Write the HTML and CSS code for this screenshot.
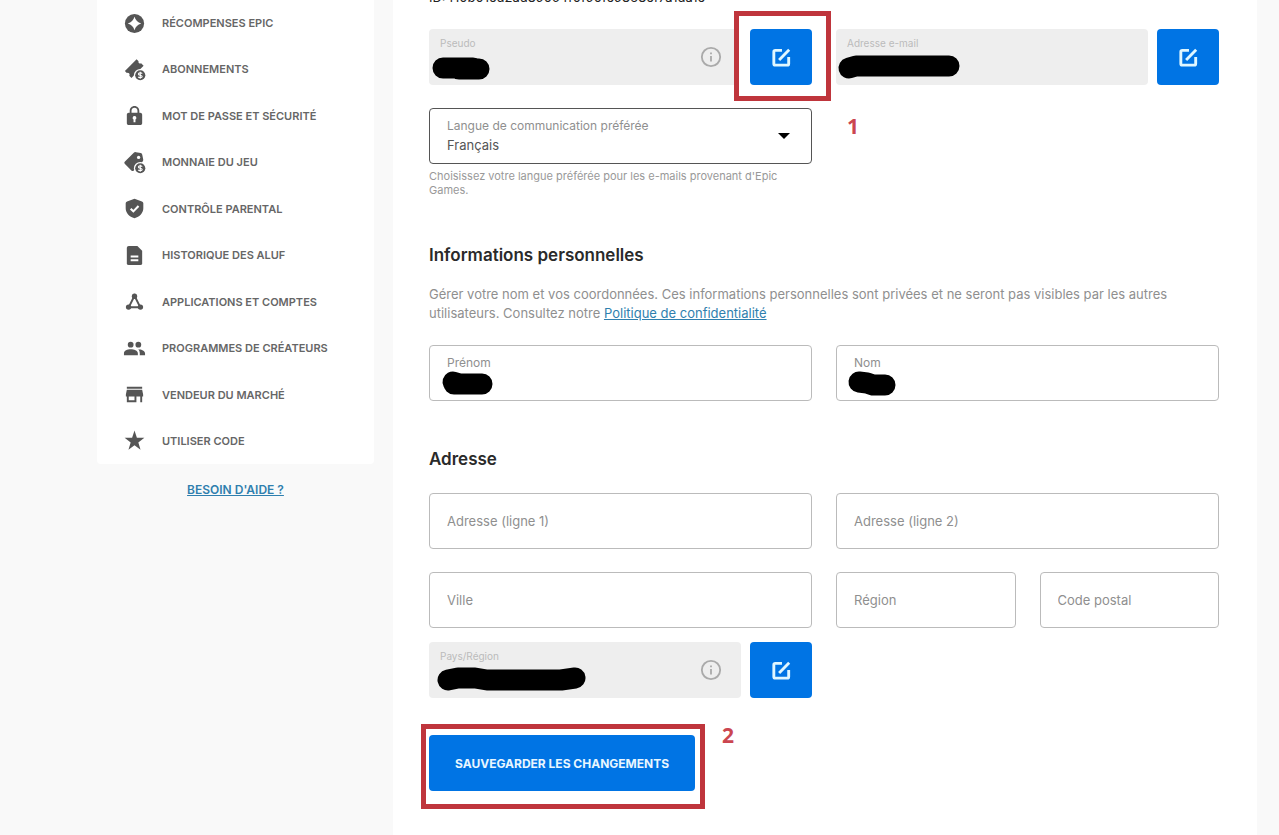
FILE: index.html
```html
<!DOCTYPE html>
<html lang="fr">
<head>
  <meta charset="UTF-8">
  <meta name="viewport" content="width=device-width, initial-scale=1.0">
  <title>Paramètres du compte</title>
  <link rel="stylesheet" href="styles.css">
</head>
<body>

<div class="page">
  <!-- Sidebar -->
  <aside class="sidebar">
    <nav>
      <ul class="menu">
        <li><a href="#">
          <svg class="icon" viewBox="0 0 24 24"><circle cx="12" cy="12" r="10"/><path fill="#fff" d="M12 5q1.600 5.400 7 7q-5.400 1.600-7 7q-1.600-5.400-7-7q5.400-1.600 7-7z"/></svg>
          Récompenses Epic</a></li>
        <li><a href="#">
          <svg class="icon" viewBox="0 0 24 24"><path d="M2 13.500L14.200 1.300l2 2q-.4 1.600.7 2.200t2-.1l2.600 2.700L8.800 20.800l-2.200-2.200q.7-1.800-.3-2.700t-2.300-.3z"/><circle cx="18" cy="18" r="6.600" fill="#fff"/><circle cx="18" cy="18" r="5.300"/><path fill="none" stroke="#fff" stroke-width="1.200" d="M20 16.300q-.6-.9-2-.9-1.900 0-1.900 1.300 0 1.100 1.900 1.300 2 .3 2 1.400 0 1.200-2 1.200-1.500 0-2.100-.9M18 14.400v7.200"/></svg>
          Abonnements</a></li>
        <li><a href="#">
          <svg class="icon" viewBox="0 0 24 24"><path fill-rule="evenodd" d="M18 9h-1V7c0-2.760-2.240-5-5-5S7 4.240 7 7v2H6c-1.100 0-2 .9-2 2v9c0 1.100.9 2 2 2h12c1.100 0 2-.9 2-2v-9c0-1.100-.9-2-2-2zM8.900 7c0-1.710 1.390-3.100 3.100-3.100s3.100 1.390 3.100 3.100v2H8.900V7zM12 12.500a2 2 0 0 0-1 3.700V19h2v-2.800a2 2 0 0 0-1-3.700z"/></svg>
          Mot de passe et sécurité</a></li>
        <li><a href="#">
          <svg class="icon" viewBox="0 0 24 24"><path d="M1.800 11.200L11 2q1-1 2.500-.8l5 1q1.300.3 1.600 1.600l1 5q.2 1.500-.8 2.500L11 20.500q-1 .8-2 0l-7.200-7.200q-1-1 0-2.100z"/><circle cx="16.300" cy="6.700" r="1.700" fill="#fff"/><circle cx="18" cy="18" r="6.600" fill="#fff"/><circle cx="18" cy="18" r="5.300"/><path fill="none" stroke="#fff" stroke-width="1.200" d="M20 16.300q-.6-.9-2-.9-1.900 0-1.900 1.300 0 1.100 1.900 1.300 2 .3 2 1.400 0 1.200-2 1.200-1.500 0-2.100-.9M18 14.400v7.200"/></svg>
          Monnaie du jeu</a></li>
        <li><a href="#">
          <svg class="icon" viewBox="0 0 24 24"><path d="M12 1.800l7.800 2.800q1.400.5 1.400 2v5.200c0 5-3.700 8.800-9.200 10.400-5.500-1.600-9.200-5.400-9.200-10.400V6.600q0-1.500 1.400-2z"/><path fill="none" stroke="#fff" stroke-width="2.200" d="M8 12.300l2.800 2.700 5.400-5.500"/></svg>
          Contrôle parental</a></li>
        <li><a href="#">
          <svg class="icon" viewBox="0 0 24 24"><path d="M6 2h9l5 5v13q0 2-2 2H6q-2 0-2-2V4q0-2 2-2z"/><path stroke="#fff" stroke-width="2" d="M8 13h8M8 17h8"/></svg>
          Historique des aluf</a></li>
        <li><a href="#">
          <svg class="icon" viewBox="0 0 24 24"><path fill="none" stroke="#555" stroke-width="2" d="M12 6L6 18h12z"/><circle cx="12" cy="6.500" r="2.800"/><circle cx="5.800" cy="17.800" r="2.800"/><circle cx="18.200" cy="17.800" r="2.800"/></svg>
          Applications et comptes</a></li>
        <li><a href="#">
          <svg class="icon" viewBox="0 0 24 24"><circle cx="8" cy="8" r="3"/><circle cx="16" cy="8" r="3"/><path d="M1 19v-2c0-2.700 3.500-4.200 7-4.200s7.500 1.500 7.500 4.200v2zM16 12.800c3.500.2 7 1.700 7 4.200v2h-5.500v-2q0-2.600-1.500-4.200z"/></svg>
          Programmes de créateurs</a></li>
        <li><a href="#">
          <svg class="icon" viewBox="0 0 24 24"><path d="M20 4H4v2h16V4zm1 10v-2l-1-5H4l-1 5v2h1v6h10v-6h4v6h2v-6h1zm-9 4H6v-4h6v4z"/></svg>
          Vendeur du marché</a></li>
        <li><a href="#">
          <svg class="icon" viewBox="0 0 24 24"><path d="M12 1.500l2.500 7.700h7.800l-6.300 4.800 2.300 7.700-6.300-4.700-6.300 4.700L8 14 1.700 9.200h7.800z"/></svg>
          Utiliser code</a></li>
      </ul>
    </nav>
    <a class="help" href="#">BESOIN D'AIDE ?</a>
  </aside>

  <!-- Account form -->
  <main class="content">
    <form>
      <p class="account-id">ID: f10b01ed2ad890c4f0f90fe9868ef7a1da1e</p>

      <div class="grid">
        <div class="locked">
          <div class="field field-locked">
            <div class="field-text">
              <label for="pseudo">Pseudo</label>
              <input type="text" id="pseudo" readonly>
            </div>
            <svg class="info" viewBox="0 0 24 24"><circle cx="12" cy="12" r="10"/><path d="M12 11v6M12 7v2"/></svg>
            <svg class="mask" viewBox="0 0 312 56"><path d="M14 39H44M30 40H50"/></svg>
          </div>
          <div class="marked marked-edit">
            <button class="edit" type="button" aria-label="Modifier le pseudo">
              <svg viewBox="0 0 24 24"><path d="M12.500 4.500H5.500Q4 4.500 4 6v12.500Q4 20 5.500 20h12.500q1.500 0 1.500-1.500V11.500M9.500 14.500L20 4"/></svg>
            </button>
          </div>
        </div>
        <div class="locked">
          <div class="field field-locked">
            <div class="field-text">
              <label for="email">Adresse e-mail</label>
              <input type="email" id="email" readonly>
            </div>
            <svg class="mask" viewBox="0 0 312 56"><path d="M13 39L20 37H113"/></svg>
          </div>
          <button class="edit" type="button" aria-label="Modifier l'adresse e-mail">
            <svg viewBox="0 0 24 24"><path d="M12.500 4.500H5.500Q4 4.500 4 6v12.500Q4 20 5.500 20h12.500q1.500 0 1.500-1.500V11.500M9.500 14.500L20 4"/></svg>
          </button>
        </div>
        <div>
          <div class="field field-select">
            <div class="field-text">
              <label for="langue">Langue de communication préférée</label>
              <select id="langue">
                <option>Français</option>
              </select>
            </div>
            <svg class="arrow" viewBox="0 0 12 6"><path d="M0 0h12L6 6z"/></svg>
          </div>
          <p class="hint">Choisissez votre langue préférée pour les e-mails provenant d'Epic Games.</p>
        </div>
        <strong class="step step-one">1</strong>
      </div>

      <h2>Informations personnelles</h2>
      <p class="intro">Gérer votre nom et vos coordonnées. Ces informations personnelles sont privées et ne seront pas visibles par les autres utilisateurs. Consultez notre <a href="#">Politique de confidentialité</a></p>
      <div class="grid">
        <div class="field">
          <div class="field-text">
            <label for="prenom">Prénom</label>
            <input type="text" id="prenom">
          </div>
          <svg class="mask" viewBox="0 0 312 56"><path d="M23 36L30 38H52M24 38H52"/></svg>
        </div>
        <div class="field">
          <div class="field-text">
            <label for="nom">Nom</label>
            <input type="text" id="nom">
          </div>
          <svg class="mask" viewBox="0 0 312 56"><path d="M22 36L30 37 36 39H48"/></svg>
        </div>
      </div>

      <h2>Adresse</h2>
      <div class="grid">
        <div class="field"><input type="text" aria-label="Adresse (ligne 1)" placeholder="Adresse (ligne 1)"></div>
        <div class="field"><input type="text" aria-label="Adresse (ligne 2)" placeholder="Adresse (ligne 2)"></div>
        <div class="field"><input type="text" aria-label="Ville" placeholder="Ville"></div>
        <div class="grid">
          <div class="field"><input type="text" aria-label="Région" placeholder="Région"></div>
          <div class="field"><input type="text" aria-label="Code postal" placeholder="Code postal"></div>
        </div>
      </div>
      <div class="grid country">
        <div class="locked">
          <div class="field field-locked">
            <div class="field-text">
              <label for="pays">Pays/Région</label>
              <input type="text" id="pays" readonly>
            </div>
            <svg class="info" viewBox="0 0 24 24"><circle cx="12" cy="12" r="10"/><path d="M12 11v6M12 7v2"/></svg>
            <svg class="mask" viewBox="0 0 312 56"><path d="M19 38L29 36H46L58 38H132L146 36"/></svg>
          </div>
          <button class="edit" type="button" aria-label="Modifier le pays">
            <svg viewBox="0 0 24 24"><path d="M12.500 4.500H5.500Q4 4.500 4 6v12.500Q4 20 5.500 20h12.500q1.500 0 1.500-1.500V11.500M9.500 14.500L20 4"/></svg>
          </button>
        </div>
      </div>

      <div class="actions">
        <div class="marked marked-save">
          <button class="save" type="submit">SAUVEGARDER LES CHANGEMENTS</button>
        </div>
        <strong class="step">2</strong>
      </div>
    </form>
  </main>
</div>

</body>
</html>
```
FILE: styles.css
```css
* {
  box-sizing: border-box;
}
body {
  margin: 0;
  background-color: #f9f9f9;
  font-family: Inter, "Liberation Sans", sans-serif;
  font-size: 13px;
  color: #8f8f8f;
}
p, h2, ul {
  margin: 0;
  padding: 0;
}
a {
  color: #2f7fae;
}
.page {
  display: grid;
  grid-template-columns: 277px 1fr;
  gap: 19px;
  min-height: 100vh;
  padding: 0 22px 0 97px;
}

/* Sidebar */
.menu {
  display: flex;
  flex-direction: column;
  justify-content: space-between;
  min-height: 464px;
  list-style: none;
  background-color: white;
  border-radius: 0 0 4px 4px;
}
.menu a {
  display: flex;
  align-items: center;
  gap: 16px;
  height: 46px;
  padding-left: 26px;
  font-size: 11px;
  font-weight: 600;
  color: #666;
  text-decoration: none;
  text-transform: uppercase;
}
.icon {
  width: 23px;
  height: 23px;
  fill: #555;
}
.help {
  display: block;
  margin-top: 18px;
  text-align: center;
  font-size: 12px;
  font-weight: 600;
  line-height: 16px;
}

/* Form */
.content {
  padding: 0 38px 26px 36px;
  background-color: white;
  overflow: hidden;
}
.account-id {
  margin-top: -13px;
  margin-bottom: 22px;
  font-size: 13px;
  line-height: 20px;
  color: #222;
}
h2 {
  font-size: 17px;
  font-weight: 600;
  line-height: 24px;
  color: #2a2a2a;
}
.grid {
  display: grid;
  grid-template-columns: 1fr 1fr;
  gap: 23px 24px;
}
.country {
  margin-top: 14px;
}
.field {
  position: relative;
  display: flex;
  align-items: center;
  width: 100%;
  height: 56px;
  padding: 0 17px;
  border: 1px solid #bbb;
  border-radius: 4px;
}
.field-text {
  display: flex;
  flex-direction: column;
  flex: 1;
}
.field label {
  font-size: 12px;
  line-height: 18px;
}
.field input,
.field select {
  width: 100%;
  height: 20px;
  padding: 0;
  border: 0;
  outline: 0;
  background: none;
  appearance: none;
  font-family: inherit;
  font-size: 13px;
  color: #555;
}
.field input::placeholder {
  color: #8f8f8f;
}
.field-select {
  border-color: #555;
}
.arrow {
  width: 12px;
  height: 6px;
  margin-right: 4px;
}
.field-locked {
  padding: 0 19px 0 11px;
  border: 0;
  background-color: #eee;
}
.field-locked label {
  font-size: 10px;
  line-height: 16px;
  padding-bottom: 8px;
  color: #bbb;
}
.info {
  width: 22px;
  height: 22px;
  fill: none;
  stroke: #aaa;
  stroke-width: 2;
}
.mask {
  position: absolute;
  top: 0;
  left: 0;
  width: 312px;
  height: 56px;
  fill: none;
  stroke: #000;
  stroke-width: 21;
  stroke-linecap: round;
  stroke-linejoin: round;
}
.locked {
  display: flex;
  gap: 9px;
}
.edit,
.save {
  position: relative;
  height: 56px;
  border: 0;
  border-radius: 4px;
  background-color: #0074e4;
  color: #e8f6ff;
  cursor: pointer;
}
.edit {
  flex: none;
  width: 62px;
  padding: 0;
}
.edit svg {
  display: block;
  width: 23px;
  height: 23px;
  margin: 0 auto;
  fill: none;
  stroke: #e0f7ff;
  stroke-width: 3;
}
.hint {
  margin-top: 5px;
  font-size: 11px;
  line-height: 14px;
  color: #999;
}
.grid + h2 {
  margin-top: 46px;
}
.intro {
  margin: 18px 0 22px;
  line-height: 19px;
}
h2 + .grid {
  margin-top: 22px;
}

/* Red frames and step numbers */
.marked {
  position: relative;
  display: flex;
}
.marked::before {
  content: "";
  position: absolute;
  border: 5px solid #bf353c;
  background-color: white;
}
.marked-edit::before {
  inset: -18px -19px -16px -16px;
}
.marked-save::before {
  inset: -11px -10px -18px -8px;
}
.step {
  font-family: "Open Sans", sans-serif;
  font-size: 21px;
  line-height: 28px;
  color: #cb4650;
}
.step-one {
  padding: 4px 11px;
}
.actions {
  display: flex;
  gap: 27px;
  margin-top: 37px;
}
.actions .step {
  margin-top: -14px;
}
.save {
  padding: 0 26px;
  font-family: inherit;
  font-size: 12px;
  font-weight: 700;
}
```
